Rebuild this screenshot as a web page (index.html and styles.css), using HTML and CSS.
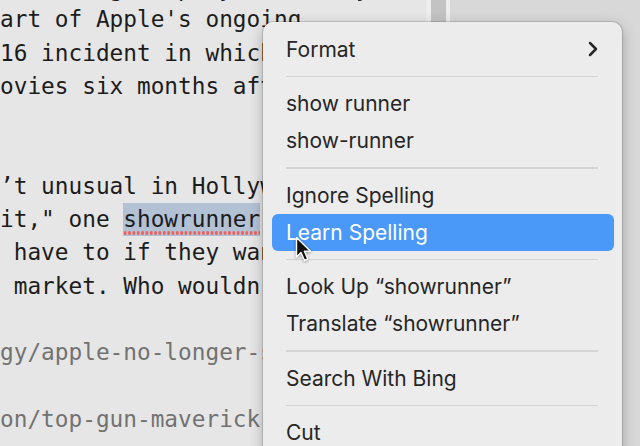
FILE: index.html
```html
<!DOCTYPE html>
<html lang="en">

<head>
    <meta charset="UTF-8">
    <meta name="viewport" content="width=device-width, initial-scale=1.0">
    <title>Draft</title>
    <link rel="stylesheet" href="styles.css">
</head>

<body>
    <div class='window'>
        <div class='editor'>
            <div class='line cut'>reshoot gets played down by</div>
            <div class='line'>art of Apple's ongoing</div>
            <div class='line'>16 incident in which the studio</div>
            <div class='line'>ovies six months after their</div>
            <div class='line'> </div>
            <div class='line'> </div>
            <div class='line'>’t unusual in Hollywood these</div>
            <div class='line'>it," one <span class='typo'>showrunner</span> told us.</div>
            <div class='line'> have to if they want to stay</div>
            <div class='line'> market. Who wouldn't?"</div>
            <div class='line'> </div>
            <div class='line link'>gy/apple-no-longer-streaming</div>
            <div class='line'> </div>
            <div class='line link'>on/top-gun-maverick-release</div>
        </div>
        <div class='gutter'>
            <div class='thumb'></div>
        </div>
        <div class='side'></div>
    </div>

    <!-- spelling context menu -->
    <div class='menu'>
        <div class='item'>Format
            <svg class='chevron' width='10' height='16' viewBox='0 0 10 16'>
                <path d='M2 2 L8 8 L2 14' fill='none' stroke='#262626' stroke-width='2.5' stroke-linecap='round' stroke-linejoin='round' />
            </svg>
        </div>
        <div class='sep'></div>
        <div class='item'>show runner</div>
        <div class='item'>show-runner</div>
        <div class='sep'></div>
        <div class='item'>Ignore Spelling</div>
        <div class='item active'>Learn Spelling</div>
        <div class='sep'></div>
        <div class='item'>Look Up “showrunner”</div>
        <div class='item'>Translate “showrunner”</div>
        <div class='sep'></div>
        <div class='item'>Search With Bing</div>
        <div class='sep'></div>
        <div class='item'>Cut</div>
        <div class='item'>Copy</div>
    </div>

    <svg class='pointer' width='20' height='28' viewBox='0 0 20 28'>
        <path d='M1.5 1.5 L1.5 21 L6 16.5 L9.5 24.5 L12.8 23 L9.4 15.2 L15.5 15.2 Z' fill='#111' stroke='#fff' stroke-width='1.4' stroke-linejoin='round' />
    </svg>
</body>

</html>
```

FILE: styles.css
```css
body {
    margin: 0;
    width: 640px;
    height: 446px;
    overflow: hidden;
    position: relative;
    background: #d8d8d8;
}

.window {
    display: flex;
    height: 100%;
}

.editor {
    width: 426px;
    flex: none;
    overflow: hidden;
    background: #e6e6e6;
    font-family: "DejaVu Sans Mono", monospace;
    font-size: 22.75px;
    line-height: 33.3px;
    color: #1c1c1c;
}

.line {
    white-space: pre;
    height: 33.3px;
}

.cut {
    margin-top: -28px;
    margin-bottom: -2.1px;
}

.link {
    color: #727272;
}

.typo {
    display: inline-block;
    position: relative;
    vertical-align: top;
    background: #b3c1d5;
}

.typo:after {
    content: '';
    position: absolute;
    left: 0;
    right: 0;
    bottom: 1.5px;
    height: 3.5px;
    background: radial-gradient(circle, #ef5f5a 1.4px, transparent 1.8px);
    background-size: 4.35px 3.5px;
    background-repeat: repeat-x;
}

.gutter {
    width: 24px;
    flex: none;
    background: #ededed;
    display: flex;
    justify-content: center;
}

.thumb {
    width: 15px;
    background: #c3c3c3;
}

.side {
    flex: 1;
    background: #d8d8d8;
}

.menu {
    position: absolute;
    left: 263px;
    top: 22px;
    width: 359px;
    height: 460px;
    box-sizing: border-box;
    padding: 8.5px 0;
    background: #ececec;
    border-radius: 10px;
    box-shadow: 0 0 0 1px rgba(0, 0, 0, .12), 0 4px 14px rgba(0, 0, 0, .28);
    font-family: Inter, "Liberation Sans", sans-serif;
    font-size: 21px;
    color: #262626;
}

.item {
    height: 37px;
    margin: 0 8.5px;
    padding: 0 16px 0 14.5px;
    border-radius: 6px;
    display: flex;
    align-items: center;
    justify-content: space-between;
}

.item.active {
    background: #4a99f8;
    color: white;
}

.sep {
    height: 17.5px;
    margin: 0 24px 0 23px;
    display: flex;
    align-items: center;
}

.sep:after {
    content: '';
    flex: 1;
    height: 1.5px;
    background: #d4d4d4;
}

.chevron {
    display: block;
}

.pointer {
    position: absolute;
    left: 295px;
    top: 236px;
    filter: drop-shadow(0 1px 1.5px rgba(0, 0, 0, .35));
}
```
